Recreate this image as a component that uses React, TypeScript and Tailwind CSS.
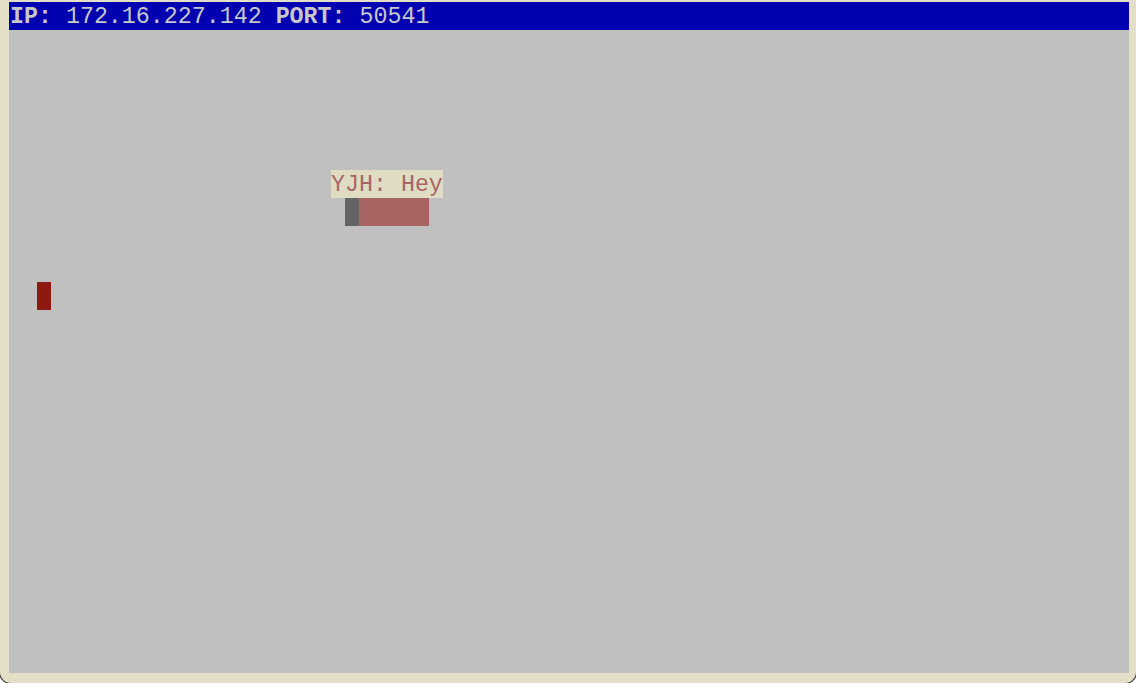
import React from "react";

const mono = { fontFamily: '"Liberation Mono", "Courier New", monospace' };

export default function App() {
  return (
    <div className="w-[1136px] h-[683px] bg-white overflow-hidden">
      <div className="w-full h-full bg-[#e4e0c8] rounded-b-[11px] shadow-[0_0_0_1px_#333] pt-[2px] pl-[9px] pr-[7px] pb-[10px] flex flex-col">
        <div
          className="h-[28px] bg-[#0000b0] text-[#c8c8c8] text-[23.3px] leading-[26px] pt-[2px] whitespace-pre pl-[1px]"
          style={mono}
        >
          <span className="font-bold">IP:</span> 172.16.227.142 <span className="font-bold">PORT:</span> 50541
        </div>
        <div className="flex-1 bg-[#c0c0c0] flex flex-col" style={mono}>
          <div className="h-[140px]" />
          <div className="pl-[322px] flex">
            <div className="h-[28px] w-[112px] bg-[#e0dcc4] text-[#a86464] text-[23.3px] leading-[26px] pt-[2px] whitespace-pre">
              YJH: Hey
            </div>
          </div>
          <div className="pl-[336px] flex">
            <div className="h-[28px] w-[14px] bg-[#646464]" />
            <div className="h-[28px] w-[70px] bg-[#a66462]" />
          </div>
          <div className="h-[56px]" />
          <div className="pl-[28px] flex">
            <div className="h-[28px] w-[14px] bg-[#8c1a10]" />
          </div>
        </div>
      </div>
    </div>
  );
}
